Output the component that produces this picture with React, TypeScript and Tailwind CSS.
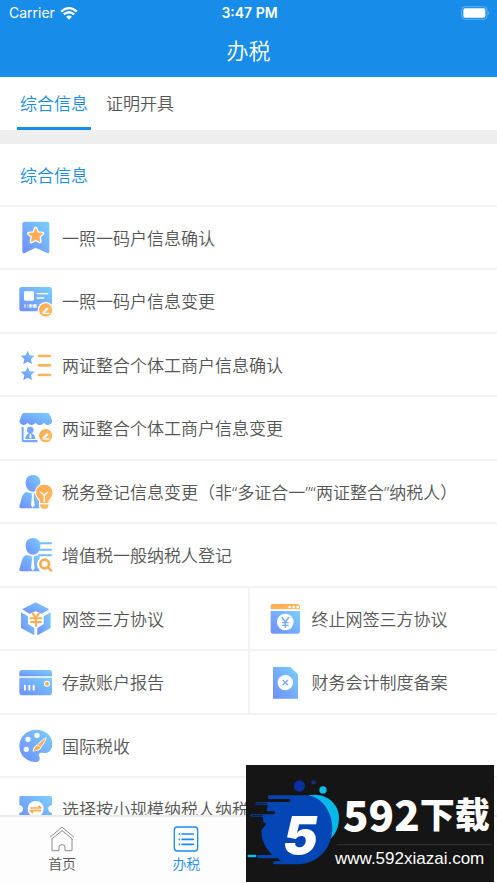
import type { ReactNode } from "react";

const BLUE = "url(#fill-blue)";
const ORANGE = "url(#fill-orange)";

function Gradients() {
  return (
    <svg className="absolute size-0" aria-hidden="true">
      <defs>
        <linearGradient id="fill-blue" x1="0" y1="1" x2="1" y2="0">
          <stop offset="0" stopColor="#6e8dfb" />
          <stop offset="1" stopColor="#7bd0fd" />
        </linearGradient>
        <linearGradient id="fill-orange" x1="0" y1="0" x2="1" y2="1">
          <stop offset="0" stopColor="#fba94b" />
          <stop offset="1" stopColor="#ffbe6c" />
        </linearGradient>
      </defs>
    </svg>
  );
}

function Icon({ children }: { children: ReactNode }) {
  return (
    <svg viewBox="0 0 102 102" className="size-[34px] shrink-0" fill="none" aria-hidden="true">
      {children}
    </svg>
  );
}

const STAR = "M0-21 6-7 21-6 10 4 13 19 0 12-13 19-10 4-21-6-6-7Z";

function EditBadge({ y }: { y: number }) {
  return (
    <g transform={`translate(80 ${y})`}>
      <circle r="24" fill="#fff" />
      <circle r="20" fill={ORANGE} />
      <path d="M-9 5 4-8 9-3-3 8H-10Z" fill="#fff" />
      <path d="M-9 10H11" stroke="#fff" strokeWidth="4" />
    </g>
  );
}

function Person() {
  return (
    <>
      <path d="M42 0C57 0 64 10 64 23 64 38 55 50 42 50S20 38 20 23C20 10 27 0 42 0Z" fill={BLUE} />
      <path d="M22 51Q32 54 41 54 51 54 62 51V100H5Q0 100 1 94L8 69Q12 54 22 51Z" fill={BLUE} />
      <path d="M37 55H46L44 63 47 91 41 98 36 91 39 63Z" fill="#fff" />
    </>
  );
}

function BookmarkIcon() {
  return (
    <Icon>
      <path d="M17 2H84Q91 2 91 9V91Q91 99 84 96L50 80 17 96Q10 99 10 91V9Q10 2 17 2Z" fill={BLUE} />
      <path d={STAR} transform="translate(50 43)" fill="#fdae56" stroke="#fff" strokeWidth="10" strokeLinejoin="round" paintOrder="stroke" />
      <path d={STAR} transform="translate(50 43)" fill="#fdae56" stroke="#fdae56" strokeWidth="2" strokeLinejoin="round" />
    </Icon>
  );
}

function CardEditIcon() {
  return (
    <Icon>
      <rect x="1" y="9" width="98" height="73" rx="7" fill={BLUE} />
      <rect x="15" y="22" width="30" height="28" rx="4" fill="#fff" />
      <path d="M54 29H86M54 42H74" stroke="#fff" strokeWidth="4" strokeLinecap="round" />
      <path d="M15 66H21M25 66H28" stroke="#fff" strokeWidth="10" opacity=".6" />
      <path d="M31 66H38M41 66H53" stroke="#fff" strokeWidth="10" />
      <path d="M44 61V71M49 61V71" stroke="#8eafff" strokeWidth="1" />
      <EditBadge y={78} />
    </Icon>
  );
}

function StarListIcon() {
  return (
    <Icon>
      <path d={STAR} transform="translate(26 29)" fill={BLUE} />
      <path d={STAR} transform="translate(26 77)" fill={BLUE} />
      <g fill={ORANGE}>
        <rect x="56" y="20" width="41" height="8" rx="4" />
        <rect x="56" y="48" width="41" height="8" rx="4" />
        <rect x="56" y="77" width="41" height="8" rx="4" />
      </g>
    </Icon>
  );
}

function ShopEditIcon() {
  return (
    <Icon>
      <path d="M16 6H85Q90 6 92 10L100 30Q98 41 87 42 79 42 75 35 70 42 62 42 54 42 50 35 45 42 38 42 30 42 26 35 21 42 13 42 3 41 1 30L9 10Q11 6 16 6Z" fill={BLUE} />
      <path d="M8 48H14V87H53Q56 87 56 90 56 94 53 94H14Q8 94 8 87Z" fill="#78a8fc" />
      <circle cx="34" cy="57" r="10" fill="#72a9fc" />
      <path d="M30 65H38L47 74Q49 76 49 84H19Q19 76 21 74Z" fill="#72a9fc" />
      <path d="M33 68H36L38 79 34 83 31 79Z" fill="#fff" />
      <EditBadge y={74} />
    </Icon>
  );
}

function PersonBulbIcon() {
  return (
    <Icon>
      <Person />
      <path d="M76 29C90 29 100 39 100 53 100 63 95 69 88 77V93Q86 101 76 101T64 93V77C57 69 52 63 52 53 52 39 62 29 76 29Z" fill={ORANGE} stroke="#fff" strokeWidth="8" paintOrder="stroke" />
      <path d="M76 29C90 29 100 39 100 53 100 63 95 69 88 77V93Q86 101 76 101T64 93V77C57 69 52 63 52 53 52 39 62 29 76 29Z" fill={ORANGE} />
      <path d="M66 52 76 61 86 52M76 61V80" stroke="#fff" strokeWidth="4" strokeLinecap="round" />
      <path d="M62 86H90" stroke="#fff" strokeWidth="4" />
    </Icon>
  );
}

function PersonSearchIcon() {
  return (
    <Icon>
      <g stroke="#72bdfd" strokeWidth="6" strokeLinecap="round">
        <path d="M58 16H96M62 35H96M60 52H96" />
      </g>
      <Person />
      <circle cx="78" cy="79" r="24" fill="#fff" />
      <circle cx="77" cy="78" r="13" stroke="#fcac50" strokeWidth="8" />
      <path d="M87 88 96 97" stroke="#fcac50" strokeWidth="8" strokeLinecap="round" />
    </Icon>
  );
}

function CubeIcon() {
  return (
    <Icon>
      <path d="M50 1 91 22 68 35 50 28 32 35 9 22Z" fill={BLUE} />
      <path d="M6 31 27 43V66L46 78V100L6 78Z" fill={BLUE} />
      <path d="M95 31 74 43V66L55 78V100L95 78Z" fill={BLUE} />
      <path d="M41 34 50 47 60 34M34 49H68M36 60H66M51 45V72" stroke="#fdae52" strokeWidth="6" strokeLinecap="round" />
    </Icon>
  );
}

function BankCardIcon() {
  return (
    <Icon>
      <path d="M9 15H91Q99 15 99 23V34H1V23Q1 15 9 15Z" fill={BLUE} />
      <path d="M1 38H99V82Q99 91 91 91H9Q1 91 1 82Z" fill={BLUE} />
      <path d="M18 62V74M31 62V74M44 62V74" stroke="#fff" strokeWidth="6" strokeLinecap="round" />
      <circle cx="84" cy="56" r="9" fill="#fff" />
      <circle cx="84" cy="56" r="6" fill="#fcac50" />
    </Icon>
  );
}

function PaletteIcon() {
  return (
    <Icon>
      <path d="M52 2C80 2 101 22 100 44 99 65 89 73 73 72 62 70 57 75 61 83 65 95 57 100 46 99 20 97 0 76 1 49 2 22 25 2 52 2Z" fill={BLUE} />
      <g fill="#fff">
        <circle cx="27" cy="31" r="8" />
        <circle cx="54" cy="19" r="8" />
        <circle cx="22" cy="61" r="8" />
      </g>
      <path d="M80 28Q82 31 65 54L57 48Q78 27 80 28ZM55 49 64 56Q60 64 43 65 46 54 55 49Z" fill="#fdae56" stroke="#fff" strokeWidth="5" strokeLinejoin="round" paintOrder="stroke" />
    </Icon>
  );
}

function TicketIcon() {
  return (
    <Icon>
      <path d="M5 12H95Q99 12 99 17V40A11 11 0 0 0 99 62V86Q99 90 95 90H5Q1 90 1 86V62A11 11 0 0 0 1 40V17Q1 12 5 12Z" fill={BLUE} />
      <circle cx="50" cy="51" r="24" fill="#fff" />
      <path d="M34 48H66L58 41M66 56H34L42 63" stroke="#fcac50" strokeWidth="5" strokeLinejoin="round" />
    </Icon>
  );
}

function WindowYenIcon() {
  return (
    <Icon>
      <path d="M12 6H86Q93 6 93 13V22H5V13Q5 6 12 6Z" fill={ORANGE} />
      <g fill="#fff">
        <circle cx="62" cy="15" r="4" />
        <circle cx="74" cy="15" r="4" />
        <circle cx="86" cy="15" r="4" />
      </g>
      <path d="M5 27H93V88Q93 95 86 95H12Q5 95 5 88Z" fill={BLUE} />
      <circle cx="49" cy="60" r="25" fill="#fff" />
      <path d="M38 45 49 60 60 45M49 60V78M39 62H59M39 70H59" stroke="#73a9fc" strokeWidth="4" />
    </Icon>
  );
}

function DocumentIcon() {
  return (
    <Icon>
      <path d="M12 6H64L87 28V101H12Z" fill={BLUE} />
      <circle cx="49" cy="53" r="23" fill="#fff" />
      <path d="M41 45 57 61M57 45 41 61" stroke="#78a8fc" strokeWidth="4" />
    </Icon>
  );
}

type Service = { label: string; icon: ReactNode };

const ROWS: Service[][] = [
  [{ label: "一照一码户信息确认", icon: <BookmarkIcon /> }],
  [{ label: "一照一码户信息变更", icon: <CardEditIcon /> }],
  [{ label: "两证整合个体工商户信息确认", icon: <StarListIcon /> }],
  [{ label: "两证整合个体工商户信息变更", icon: <ShopEditIcon /> }],
  [{ label: "税务登记信息变更（非“多证合一”“两证整合”纳税人）", icon: <PersonBulbIcon /> }],
  [{ label: "增值税一般纳税人登记", icon: <PersonSearchIcon /> }],
  [
    { label: "网签三方协议", icon: <CubeIcon /> },
    { label: "终止网签三方协议", icon: <WindowYenIcon /> },
  ],
  [
    { label: "存款账户报告", icon: <BankCardIcon /> },
    { label: "财务会计制度备案", icon: <DocumentIcon /> },
  ],
  [{ label: "国际税收", icon: <PaletteIcon /> }],
  [{ label: "选择按小规模纳税人纳税", icon: <TicketIcon /> }],
];

function StatusBar() {
  return (
    <div className="grid h-[26px] grid-cols-3 items-center pr-[7px] pl-[9px] font-['Inter',sans-serif] text-sm font-normal">
      <div className="flex items-center gap-[5px]">
        <span>Carrier</span>
        <svg viewBox="0 0 54 40" className="h-[13px] w-[18px]" fill="none" aria-hidden="true">
          <path d="M3 14Q27-7 51 14M11 23Q27 9 43 23" stroke="currentColor" strokeWidth="7" />
          <path d="M18 30Q27 22 36 30L27 39Z" fill="currentColor" />
        </svg>
      </div>
      <span className="text-center font-semibold">3:47 PM</span>
      <svg viewBox="0 0 87 42" className="h-[14px] w-[29px] justify-self-end" fill="none" aria-hidden="true">
        <rect x="2" y="2" width="76" height="38" rx="10" stroke="#8fc6f5" strokeWidth="2" />
        <rect x="7" y="7" width="66" height="28" rx="5" fill="#fff" />
        <path d="M82 15Q87 21 82 27Z" fill="#8fc6f5" />
      </svg>
    </div>
  );
}

function Watermark() {
  return (
    <div className="absolute right-[3px] bottom-px h-[117px] w-[248px] bg-[#151515] text-white">
      <svg viewBox="0 0 744 351" className="absolute inset-0 size-full" aria-hidden="true">
        <path d="M188 91C240 80 279 117 279 158 279 186 268 207 255 220L190 200Z" fill="#06b9e8" />
        <path d="M69 91H180C226 92 259 140 259 190 259 248 216 298 155 298H84Q78 292 84 289H105L96 280H36Q31 275 36 270H79C59 251 45 224 46 196L61 177 52 171 50 155H18Q10 152 16 148H82Q91 145 84 139H62L65 119H31Q24 116 31 111H130Q137 106 130 102H69Q62 96 69 91Z" fill="#0446b5" />
        <path d="M8 273H28" stroke="#13bddf" strokeWidth="7" strokeLinecap="round" />
        <path d="M28 115H62M92 106H128M18 152H50" stroke="#151515" strokeWidth="3" />
        <circle cx="160" cy="63" r="17" fill="#0b2f9e" />
        <circle cx="203" cy="52" r="7" fill="#122d83" />
        <circle cx="231" cy="75" r="11" fill="#10bce8" />
        <path d="M272 239H737" stroke="#343434" strokeWidth="3" />
      </svg>
      <span className="absolute top-[43px] left-[37px] w-[32px] text-center font-['Inter',sans-serif] text-[52px] leading-[56px] font-black italic">
        5
      </span>
      <div className="absolute top-[26px] left-[97px] flex h-[44px] items-center font-['Noto_Sans_CJK_SC',sans-serif] font-black">
        <span className="text-[42px] leading-[44px]">592</span>
        <span className="text-[35px] leading-[44px]">下载</span>
      </div>
      <span className="absolute top-[82px] left-[89px] font-['Liberation_Sans',sans-serif] text-[17px] leading-[24px] font-normal">
        www.592xiazai.com
      </span>
    </div>
  );
}

export default function App() {
  return (
    <div className="relative flex h-screen flex-col overflow-hidden bg-white font-['Noto_Sans','Noto_Sans_CJK_SC',sans-serif] font-[350] text-[#555]">
      <Gradients />
      <header className="h-[77px] shrink-0 bg-[#188ce9] text-white">
        <StatusBar />
        <h1 className="text-center text-[22px] leading-[48px]">办税</h1>
      </header>

      <div role="tablist" className="flex h-[53px] shrink-0 gap-[12px] px-[17px] text-[17px]">
        <button role="tab" aria-selected="true" className="border-b-3 border-[#188ce9] px-[3px] pt-[3px] text-[#188ce9]">
          综合信息
        </button>
        <button role="tab" aria-selected="false" className="border-b-3 border-transparent px-[3px] pt-[3px]">
          证明开具
        </button>
      </div>
      <div className="h-[14px] shrink-0 bg-[#eee]" />

      <main className="min-h-0 flex-1 overflow-hidden text-[17px]">
        <h2 className="flex h-[63px] items-center border-b-2 border-[#f3f3f3] px-[20px] pt-[2px] text-[#188ce9]">
          综合信息
        </h2>
        <ul>
          {ROWS.map((row) => (
            <li key={row[0].label} className="flex border-b-2 border-[#f3f3f3] odd:h-[63px] even:h-[64px]">
              {row.map((service) => (
                <button
                  key={service.label}
                  className="flex flex-1 items-center gap-[9px] border-[#f3f3f3] pl-[19px] whitespace-nowrap not-last:border-r-2"
                >
                  {service.icon}
                  <span className="pt-[2px]">{service.label}</span>
                </button>
              ))}
            </li>
          ))}
        </ul>
      </main>

      <nav className="grid h-[68px] shrink-0 grid-cols-4 border-t-2 border-[#ebebeb] bg-[#fdfdfd] text-sm">
        <a href="#home" className="flex flex-col items-center gap-[2px] pt-[9px]">
          <svg viewBox="0 0 78 78" className="size-[26px]" fill="none" stroke="#8c8c8c" strokeWidth="3" aria-hidden="true">
            <path d="M3 34 39 3 75 34M9 38V74H30V63Q30 56 39 56T48 63V74H69V38M8 39 39 14 70 39" />
          </svg>
          <span>首页</span>
        </a>
        <a href="#tax" aria-current="page" className="flex flex-col items-center gap-[2px] pt-[9px] text-[#188ce9]">
          <svg viewBox="0 0 78 78" className="size-[26px]" fill="none" stroke="currentColor" strokeWidth="4" aria-hidden="true">
            <rect x="4" y="3" width="70" height="72" rx="9" />
            <path d="M27 24H61M27 40H61M27 55H61" strokeWidth="5" strokeLinecap="round" />
            <path d="M17 24H21M17 40H21M17 55H21" strokeWidth="5" />
          </svg>
          <span>办税</span>
        </a>
      </nav>

      <Watermark />
    </div>
  );
}
